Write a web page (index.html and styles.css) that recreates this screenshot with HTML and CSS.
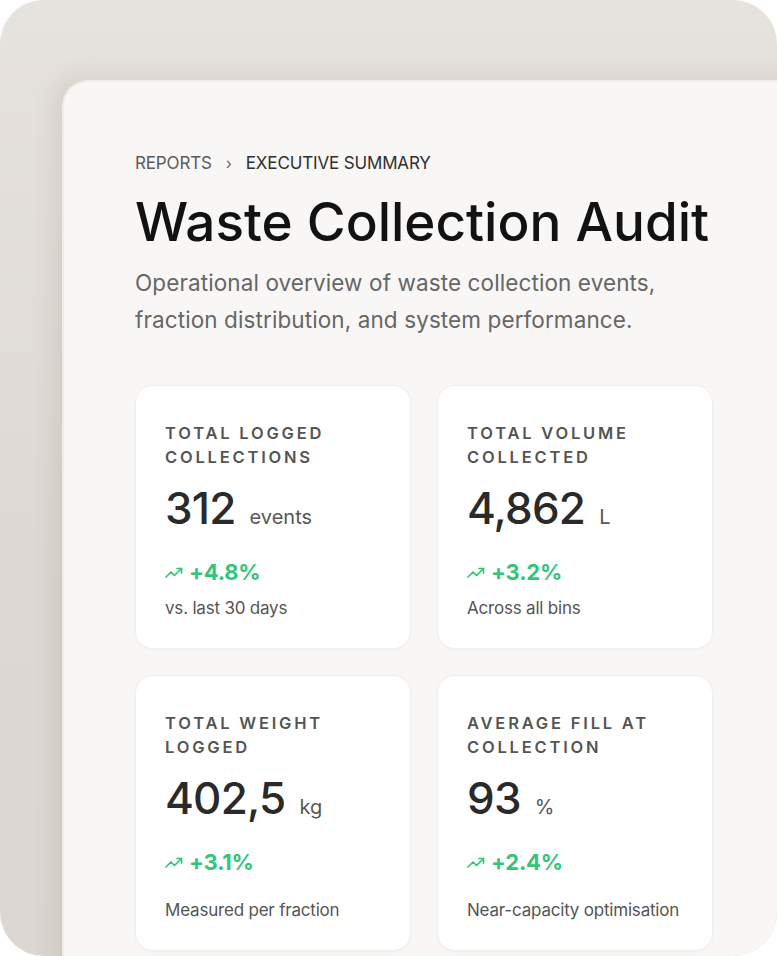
FILE: index.html
```html
<!DOCTYPE html>
<html lang="en">
<head>
<meta charset="utf-8">
<title>Waste Collection Audit</title>
<link rel="stylesheet" href="styles.css">
</head>
<body>
<div class="frame">
  <div class="panel">
    <nav class="crumbs">
      <span class="crumb">REPORTS</span>
      <span class="sep">›</span>
      <span class="crumb current">EXECUTIVE SUMMARY</span>
    </nav>
    <h1 class="title">Waste Collection Audit</h1>
    <p class="desc">Operational overview of waste collection events, fraction distribution, and system performance.</p>

    <div class="grid">
      <div class="card">
        <div class="label">TOTAL LOGGED COLLECTIONS</div>
        <div class="value"><span class="num">312</span><span class="unit">events</span></div>
        <div class="trend"><svg class="icon" viewBox="0 0 18 11" width="18" height="11"><polyline points="1,10 6,5 9.5,8.5 16.5,1.5" /><polyline points="12,1.5 16.5,1.5 16.5,6" /></svg><span>+4.8%</span></div>
        <div class="sub">vs. last 30 days</div>
      </div>
      <div class="card">
        <div class="label">TOTAL VOLUME COLLECTED</div>
        <div class="value"><span class="num">4,862</span><span class="unit">L</span></div>
        <div class="trend"><svg class="icon" viewBox="0 0 18 11" width="18" height="11"><polyline points="1,10 6,5 9.5,8.5 16.5,1.5" /><polyline points="12,1.5 16.5,1.5 16.5,6" /></svg><span>+3.2%</span></div>
        <div class="sub">Across all bins</div>
      </div>
      <div class="card">
        <div class="label">TOTAL WEIGHT LOGGED</div>
        <div class="value"><span class="num">402,5</span><span class="unit">kg</span></div>
        <div class="trend"><svg class="icon" viewBox="0 0 18 11" width="18" height="11"><polyline points="1,10 6,5 9.5,8.5 16.5,1.5" /><polyline points="12,1.5 16.5,1.5 16.5,6" /></svg><span>+3.1%</span></div>
        <div class="sub">Measured per fraction</div>
      </div>
      <div class="card">
        <div class="label">AVERAGE FILL AT COLLECTION</div>
        <div class="value"><span class="num">93</span><span class="unit">%</span></div>
        <div class="trend"><svg class="icon" viewBox="0 0 18 11" width="18" height="11"><polyline points="1,10 6,5 9.5,8.5 16.5,1.5" /><polyline points="12,1.5 16.5,1.5 16.5,6" /></svg><span>+2.4%</span></div>
        <div class="sub">Near-capacity optimisation</div>
      </div>
    </div>
  </div>
</div>
</body>
</html>
```

FILE: styles.css
```css
* { box-sizing: border-box; }

html, body {
  margin: 0;
  padding: 0;
  background: #ffffff;
}

body {
  font-family: Inter, "Noto Sans", "Liberation Sans", sans-serif;
  width: 777px;
  height: 956px;
  overflow: hidden;
}

.frame {
  width: 777px;
  height: 956px;
  border-radius: 44px;
  overflow: hidden;
  background: linear-gradient(180deg, #e6e2dd 0%, #ddd8d3 60%, #dcd7d2 100%);
  padding: 80px 0 0 62px;
}

.panel {
  width: 760px;
  height: 920px;
  background: #f8f7f5;
  border: 2px solid #efedea;
  border-right: none;
  border-bottom: none;
  border-radius: 26px 0 0 0;
  box-shadow: -6px -2px 24px rgba(110, 95, 80, 0.14);
  padding: 71px 0 0 71px;
}

.crumbs {
  display: flex;
  align-items: center;
  gap: 14px;
  height: 20px;
  font-size: 17px;
  line-height: 20px;
  letter-spacing: -0.15px;
}

.crumb { color: #5b5b5b; }
.crumb.current { color: #2f2f2f; }
.sep { color: #666; font-size: 16px; }

.title {
  margin: 20px 0 0;
  font-size: 53px;
  line-height: 58px;
  font-weight: 500;
  color: #121212;
  letter-spacing: 0;
  white-space: nowrap;
}

.desc {
  margin: 13px 0 0;
  width: 580px;
  font-size: 22.5px;
  line-height: 37px;
  color: #666;
  letter-spacing: 0.1px;
}

.grid {
  margin-top: 47px;
  display: grid;
  grid-template-columns: 276px 276px;
  grid-template-rows: 264px 276px;
  column-gap: 26px;
  row-gap: 26px;
}

.card {
  background: #ffffff;
  border: 1px solid #f1efec;
  border-radius: 18px;
  box-shadow: 0 1px 3px rgba(0, 0, 0, 0.03);
  padding: 35px 29px 28px;
  display: flex;
  flex-direction: column;
}

.label {
  font-size: 16.5px;
  line-height: 24px;
  font-weight: 600;
  letter-spacing: 2.8px;
  color: #555;
  min-height: 48px;
  max-width: 210px;
}

.value {
  margin-top: 13px;
  display: flex;
  align-items: baseline;
  height: 52px;
}

.num {
  font-size: 44px;
  line-height: 52px;
  font-weight: 500;
  color: #2a2a2a;
  letter-spacing: -0.8px;
}

.unit {
  margin-left: 14px;
  font-size: 20px;
  color: #575757;
}

.trend {
  margin-top: 24px;
  display: flex;
  align-items: center;
  gap: 6px;
  height: 28px;
  font-size: 22px;
  line-height: 28px;
  font-weight: 700;
  color: #36c47d;
  letter-spacing: -0.2px;
}

.icon {
  fill: none;
  stroke: #36c47d;
  stroke-width: 1.7;
  stroke-linecap: round;
  stroke-linejoin: round;
}

.sub {
  margin-top: auto;
  padding-top: 10px;
  font-size: 17px;
  line-height: 24px;
  color: #555;
  letter-spacing: -0.2px;
}
```
